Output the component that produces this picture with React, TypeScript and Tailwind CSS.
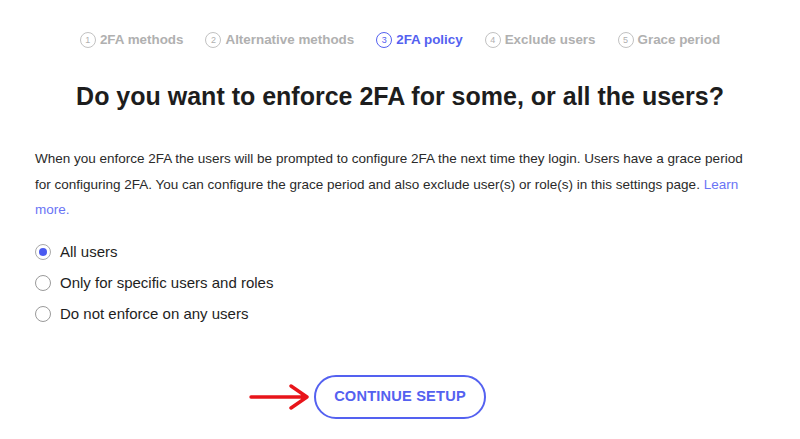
const STEPS = [
  { n: 1, label: "2FA methods" },
  { n: 2, label: "Alternative methods" },
  { n: 3, label: "2FA policy", active: true },
  { n: 4, label: "Exclude users" },
  { n: 5, label: "Grace period" },
];

const OPTIONS = ["All users", "Only for specific users and roles", "Do not enforce on any users"];

export default function App() {
  return (
    <div className="h-[439px] w-[800px] overflow-hidden bg-white font-['Liberation_Sans',Arial,sans-serif] text-[#1e1e1e]">
      <div className="flex h-[80px] items-start justify-center gap-[22px] pt-[32px]">
        {STEPS.map((step) => (
          <div
            key={step.n}
            className={`flex items-center gap-[4px] text-[13.4px] font-bold leading-[16px] ${step.active ? "text-[#5461f0]" : "text-[#b0b0b0]"}`}
          >
            <span
              className={`grid size-[16px] place-items-center rounded-full border-[1.5px] text-[9px] font-normal leading-none ${step.active ? "border-[#5461f0]" : "border-[#c2c2c2]"}`}
            >
              {step.n}
            </span>
            {step.label}
          </div>
        ))}
      </div>

      <h1 className="text-center text-[25px] font-bold leading-[32px] text-[#1d1d1d]">
        Do you want to enforce 2FA for some, or all the users?
      </h1>

      <p className="mt-[34px] w-[753px] pl-[35px] text-[13.5px] leading-[25.5px] text-[#2a2a2a]">
        When you enforce 2FA the users will be prompted to configure 2FA the next time they login. Users have a grace
        period for configuring 2FA. You can configure the grace period and also exclude user(s) or role(s) in this
        settings page. <a className="text-[#6a74f5]">Learn more.</a>
      </p>

      <div className="mt-[20px] flex flex-col gap-[13px] pl-[35px]">
        {OPTIONS.map((option, i) => (
          <label key={option} className="flex items-center gap-[9px] text-[15px] leading-[18px] text-[#1e1e1e]">
            <span
              className={`grid size-[16px] place-items-center rounded-full border ${i === 0 ? "border-[#a9a9a9]" : "border-[#9a9a9a]"}`}
            >
              {i === 0 && <span className="size-[8px] rounded-full bg-[#4a5af0]" />}
            </span>
            {option}
          </label>
        ))}
      </div>

      <div className="mt-[52px] flex items-center justify-center">
        <div className="relative">
          <svg
            className="absolute top-1/2 right-full mr-[3px] -translate-y-1/2"
            width="62"
            height="28"
            viewBox="0 0 62 28"
          >
            <path d="M2 14H58M42 3L58 14L42 25" fill="none" stroke="#e8141a" strokeWidth="3.4" strokeLinecap="round" strokeLinejoin="round" />
          </svg>
          <button className="h-[44px] w-[172px] rounded-full border-2 border-[#5461f0] text-[14.6px] font-bold tracking-[0.2px] text-[#5461f0]">
            CONTINUE SETUP
          </button>
        </div>
      </div>
    </div>
  );
}
